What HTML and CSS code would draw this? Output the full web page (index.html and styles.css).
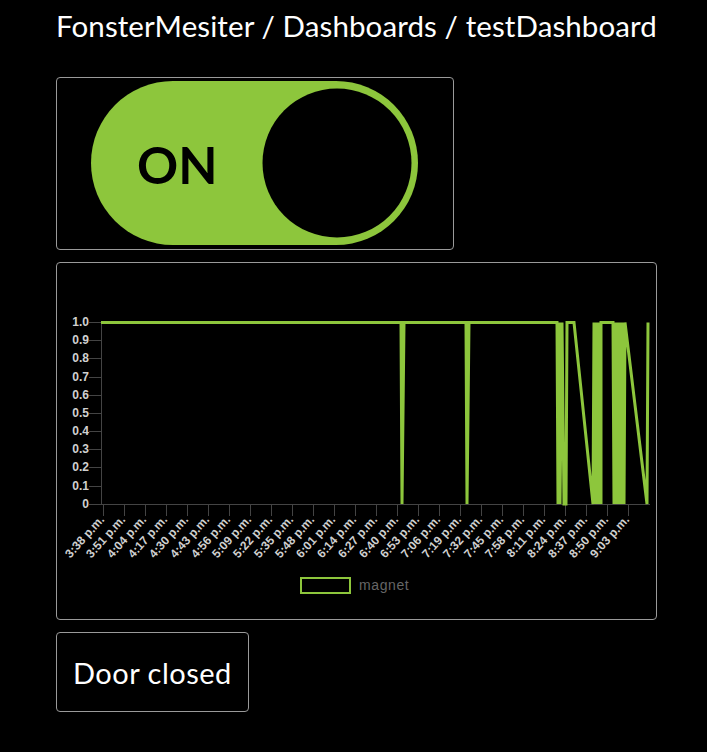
FILE: index.html
```html
<!DOCTYPE html>
<html>
<head>
<meta charset="utf-8">
<link rel="stylesheet" href="styles.css">
</head>
<body>
<div class="page">
  <h1 class="crumbs">FonsterMesiter / Dashboards / testDashboard</h1>
  <div class="widgets">
    <div class="card toggle-card">
      <svg class="toggle" width="327" height="164" viewBox="0 0 327 164">
        <rect x="0" y="0" width="327" height="164" rx="82" ry="82" fill="#8dc63c"/>
        <circle cx="246" cy="82" r="74.5" fill="#000"/>
        <text x="46" y="103" class="on-text">ON</text>
      </svg>
    </div>
    <div class="card chart-card">
      <svg class="chart" width="598" height="356" viewBox="57 263 598 356">
        <g class="axis" stroke="#444" stroke-width="1" fill="none">
          <line x1="101.5" y1="322" x2="101.5" y2="504.5"/>
          <line x1="101" y1="504.5" x2="650" y2="504.5"/>
          <line x1="89" y1="322.5" x2="101" y2="322.5"/>
          <line x1="89" y1="340.5" x2="101" y2="340.5"/>
          <line x1="89" y1="358.5" x2="101" y2="358.5"/>
          <line x1="89" y1="377.5" x2="101" y2="377.5"/>
          <line x1="89" y1="395.5" x2="101" y2="395.5"/>
          <line x1="89" y1="413.5" x2="101" y2="413.5"/>
          <line x1="89" y1="431.5" x2="101" y2="431.5"/>
          <line x1="89" y1="449.5" x2="101" y2="449.5"/>
          <line x1="89" y1="467.5" x2="101" y2="467.5"/>
          <line x1="89" y1="486.5" x2="101" y2="486.5"/>
          <line x1="89" y1="504.5" x2="101" y2="504.5"/>
        </g>
        <g class="ylabels">
          <text x="89" y="326">1.0</text>
          <text x="89" y="344">0.9</text>
          <text x="89" y="362">0.8</text>
          <text x="89" y="381">0.7</text>
          <text x="89" y="399">0.6</text>
          <text x="89" y="417">0.5</text>
          <text x="89" y="435">0.4</text>
          <text x="89" y="453">0.3</text>
          <text x="89" y="471">0.2</text>
          <text x="89" y="490">0.1</text>
          <text x="89" y="508">0</text>
        </g>
        <g class="xlabels">
          <line x1="103.5" y1="505" x2="103.5" y2="516"/><text transform="translate(105 520) rotate(-48)">3:38 p.m.</text>
          <line x1="124.5" y1="505" x2="124.5" y2="516"/><text transform="translate(126 520) rotate(-48)">3:51 p.m.</text>
          <line x1="145.5" y1="505" x2="145.5" y2="516"/><text transform="translate(147 520) rotate(-48)">4:04 p.m.</text>
          <line x1="166.5" y1="505" x2="166.5" y2="516"/><text transform="translate(168 520) rotate(-48)">4:17 p.m.</text>
          <line x1="187.5" y1="505" x2="187.5" y2="516"/><text transform="translate(189 520) rotate(-48)">4:30 p.m.</text>
          <line x1="208.5" y1="505" x2="208.5" y2="516"/><text transform="translate(210 520) rotate(-48)">4:43 p.m.</text>
          <line x1="229.5" y1="505" x2="229.5" y2="516"/><text transform="translate(231 520) rotate(-48)">4:56 p.m.</text>
          <line x1="250.5" y1="505" x2="250.5" y2="516"/><text transform="translate(252 520) rotate(-48)">5:09 p.m.</text>
          <line x1="271.5" y1="505" x2="271.5" y2="516"/><text transform="translate(273 520) rotate(-48)">5:22 p.m.</text>
          <line x1="292.5" y1="505" x2="292.5" y2="516"/><text transform="translate(294 520) rotate(-48)">5:35 p.m.</text>
          <line x1="313.5" y1="505" x2="313.5" y2="516"/><text transform="translate(315 520) rotate(-48)">5:48 p.m.</text>
          <line x1="334.5" y1="505" x2="334.5" y2="516"/><text transform="translate(336 520) rotate(-48)">6:01 p.m.</text>
          <line x1="355.5" y1="505" x2="355.5" y2="516"/><text transform="translate(357 520) rotate(-48)">6:14 p.m.</text>
          <line x1="376.5" y1="505" x2="376.5" y2="516"/><text transform="translate(378 520) rotate(-48)">6:27 p.m.</text>
          <line x1="397.5" y1="505" x2="397.5" y2="516"/><text transform="translate(399 520) rotate(-48)">6:40 p.m.</text>
          <line x1="418.5" y1="505" x2="418.5" y2="516"/><text transform="translate(420 520) rotate(-48)">6:53 p.m.</text>
          <line x1="439.5" y1="505" x2="439.5" y2="516"/><text transform="translate(441 520) rotate(-48)">7:06 p.m.</text>
          <line x1="460.5" y1="505" x2="460.5" y2="516"/><text transform="translate(462 520) rotate(-48)">7:19 p.m.</text>
          <line x1="481.5" y1="505" x2="481.5" y2="516"/><text transform="translate(483 520) rotate(-48)">7:32 p.m.</text>
          <line x1="502.5" y1="505" x2="502.5" y2="516"/><text transform="translate(504 520) rotate(-48)">7:45 p.m.</text>
          <line x1="523.5" y1="505" x2="523.5" y2="516"/><text transform="translate(525 520) rotate(-48)">7:58 p.m.</text>
          <line x1="544.5" y1="505" x2="544.5" y2="516"/><text transform="translate(546 520) rotate(-48)">8:11 p.m.</text>
          <line x1="565.5" y1="505" x2="565.5" y2="516"/><text transform="translate(567 520) rotate(-48)">8:24 p.m.</text>
          <line x1="586.5" y1="505" x2="586.5" y2="516"/><text transform="translate(588 520) rotate(-48)">8:37 p.m.</text>
          <line x1="607.5" y1="505" x2="607.5" y2="516"/><text transform="translate(609 520) rotate(-48)">8:50 p.m.</text>
          <line x1="628.5" y1="505" x2="628.5" y2="516"/><text transform="translate(630 520) rotate(-48)">9:03 p.m.</text>
        </g>
        <polyline class="series" points="101,322.5 401,322.5 402,504 404,322.5 466,322.5 467,504 469,322.5 557,322.5 558,504 559,322.5 560,504 562,322.5 564,504 566,504 567,322.5 574,322.5 593,504 594,322.5 595,504 597,322.5 598,504 600,322.5 601,504 601,322.5 613,322.5 614,504 615,322.5 616,504 617,322.5 618,504 619,322.5 620,504 621,322.5 622,504 623,322.5 624,504 625,322.5 647,504 648,322.5"/>
        <rect x="301" y="578" width="49" height="15" fill="none" stroke="#8dc63c" stroke-width="2"/>
        <text x="359" y="590" class="legend-text">magnet</text>
      </svg>
    </div>
    <div class="card door-card">Door closed</div>
  </div>
</div>
</body>
</html>
```
FILE: styles.css
```css
html, body {
  margin: 0;
  padding: 0;
  background: #000;
}
body {
  font-family: Lato, "Open Sans", sans-serif;
  color: #fff;
}
.page {
  padding: 8px 0 0 56px;
}
.crumbs {
  margin: 0;
  font-size: 29.5px;
  font-weight: 400;
  line-height: 35px;
  height: 35px;
  letter-spacing: 0.1px;
}
.widgets {
  margin-top: 34px;
  display: flex;
  flex-direction: column;
  align-items: flex-start;
  gap: 12px;
}
.card {
  border: 1px solid #9a9a9a;
  border-radius: 4px;
  box-sizing: border-box;
}
.toggle-card {
  display: flex;
  padding: 3px 35px 4px 34px;
  width: 398px;
  height: 173px;
}
.toggle {
  display: block;
}
.on-text {
  font-family: Lato, sans-serif;
  font-weight: 700;
  font-size: 51px;
  fill: #000;
}
.chart-card {
  width: 601px;
  height: 358px;
}
.chart {
  display: block;
}
.xlabels line {
  stroke: #444;
  stroke-width: 1;
}
.ylabels text {
  font-family: "Liberation Sans", Arial, sans-serif;
  font-weight: 700;
  font-size: 12px;
  fill: #d0d0d0;
  text-anchor: end;
}
.xlabels text {
  font-family: "Liberation Sans", Arial, sans-serif;
  font-weight: 700;
  font-size: 12px;
  fill: #d0d0d0;
  text-anchor: end;
}
.series {
  fill: none;
  stroke: #8dc63c;
  stroke-width: 3;
  stroke-linejoin: miter;
  stroke-miterlimit: 2;
}
.legend-text {
  font-family: "Liberation Sans", Arial, sans-serif;
  font-size: 14px;
  letter-spacing: 0.6px;
  fill: #666;
}
.door-card {
  height: 80px;
  padding: 0 16px;
  display: flex;
  align-items: center;
  font-size: 29px;
  letter-spacing: 0.5px;
}
```
